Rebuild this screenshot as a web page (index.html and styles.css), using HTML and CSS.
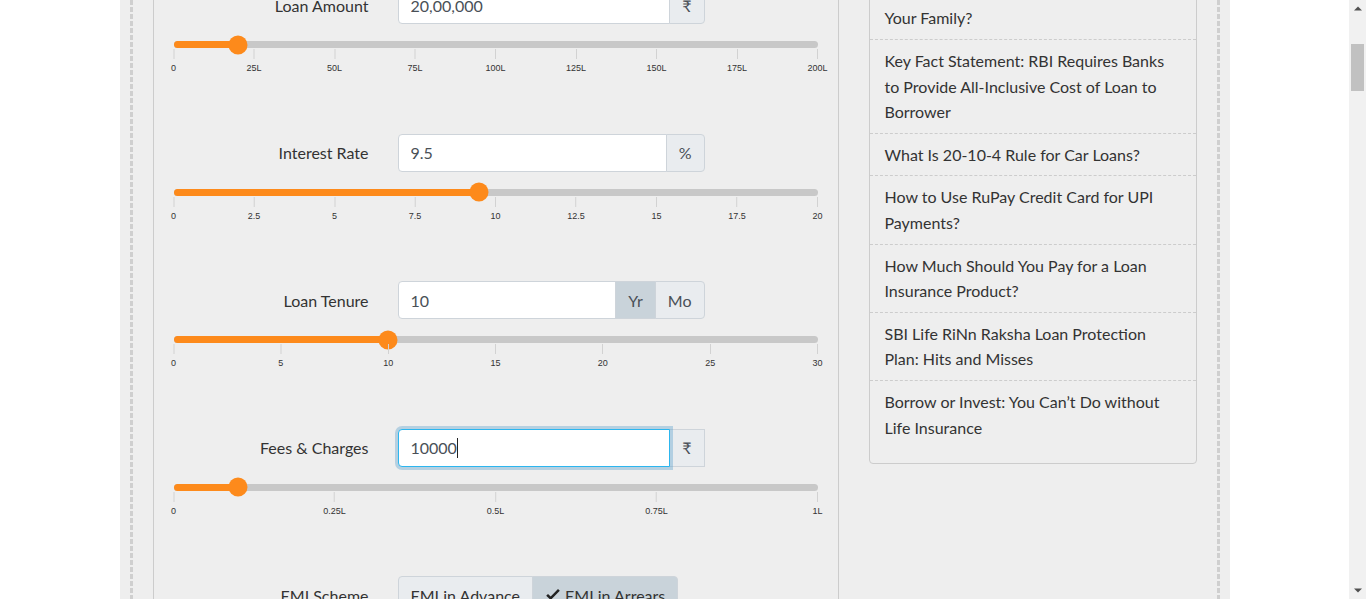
FILE: index.html
```html
<!DOCTYPE html>
<html lang="en">
<head>
<meta charset="utf-8">
<title>EMI Calculator</title>
<link rel="stylesheet" href="styles.css">
</head>
<body>
<div class="screen">
  <div class="page">
    <div class="container">
      <div class="dash"></div>
      <div class="content">
        <section class="calc">
          <div class="calc-inner">

            <div class="field">
              <div class="field-row">
                <label class="field-label">Loan Amount</label>
                <div class="input-group">
                  <input class="form-control" type="text" value="20,00,000">
                  <span class="addon">₹</span>
                </div>
              </div>
              <div class="track"><div class="fill" style="width:10%"></div><div class="handle" style="left:10%"></div></div>
              <div class="scale">
                <span class="tick" style="left:0%">0</span>
                <span class="tick" style="left:12.5%">25L</span>
                <span class="tick" style="left:25%">50L</span>
                <span class="tick" style="left:37.5%">75L</span>
                <span class="tick" style="left:50%">100L</span>
                <span class="tick" style="left:62.5%">125L</span>
                <span class="tick" style="left:75%">150L</span>
                <span class="tick" style="left:87.5%">175L</span>
                <span class="tick" style="left:100%">200L</span>
              </div>
            </div>

            <div class="field">
              <div class="field-row">
                <label class="field-label">Interest Rate</label>
                <div class="input-group">
                  <input class="form-control" type="text" value="9.5">
                  <span class="addon">%</span>
                </div>
              </div>
              <div class="track"><div class="fill" style="width:47.5%"></div><div class="handle" style="left:47.5%"></div></div>
              <div class="scale">
                <span class="tick" style="left:0%">0</span>
                <span class="tick" style="left:12.5%">2.5</span>
                <span class="tick" style="left:25%">5</span>
                <span class="tick" style="left:37.5%">7.5</span>
                <span class="tick" style="left:50%">10</span>
                <span class="tick" style="left:62.5%">12.5</span>
                <span class="tick" style="left:75%">15</span>
                <span class="tick" style="left:87.5%">17.5</span>
                <span class="tick" style="left:100%">20</span>
              </div>
            </div>

            <div class="field">
              <div class="field-row">
                <label class="field-label">Loan Tenure</label>
                <div class="input-group">
                  <input class="form-control" type="text" value="10">
                  <span class="addon active">Yr</span>
                  <span class="addon">Mo</span>
                </div>
              </div>
              <div class="track"><div class="fill" style="width:33.333%"></div><div class="handle" style="left:33.333%"></div></div>
              <div class="scale">
                <span class="tick" style="left:0%">0</span>
                <span class="tick" style="left:16.667%">5</span>
                <span class="tick" style="left:33.333%">10</span>
                <span class="tick" style="left:50%">15</span>
                <span class="tick" style="left:66.667%">20</span>
                <span class="tick" style="left:83.333%">25</span>
                <span class="tick" style="left:100%">30</span>
              </div>
            </div>

            <div class="field">
              <div class="field-row">
                <label class="field-label">Fees &amp; Charges</label>
                <div class="input-group">
                  <input class="form-control focused" type="text" value="10000">
                  <span class="addon">₹</span>
                  <span class="caret"></span>
                </div>
              </div>
              <div class="track"><div class="fill" style="width:10%"></div><div class="handle" style="left:10%"></div></div>
              <div class="scale">
                <span class="tick" style="left:0%">0</span>
                <span class="tick" style="left:25%">0.25L</span>
                <span class="tick" style="left:50%">0.5L</span>
                <span class="tick" style="left:75%">0.75L</span>
                <span class="tick" style="left:100%">1L</span>
              </div>
            </div>

            <div class="field">
              <div class="field-row">
                <label class="field-label">EMI Scheme</label>
                <div class="btn-group">
                  <span class="btn">EMI in Advance</span>
                  <span class="btn active"><svg class="check" viewBox="0 0 16 16" width="16" height="16"><path d="M1.2 8.8 L5.7 13 L14.8 3.8 L13 2.1 L5.7 9.6 L3 7 Z" fill="#222"/></svg>EMI in Arrears</span>
                </div>
              </div>
            </div>

          </div>
        </section>

        <aside class="sidebar">
          <ul class="articles">
            <li>How Much Life Cover Is Needed for<br>Your Family?</li>
            <li>Key Fact Statement: RBI Requires Banks to Provide All-Inclusive Cost of Loan to Borrower</li>
            <li>What Is 20-10-4 Rule for Car Loans?</li>
            <li>How to Use RuPay Credit Card for UPI Payments?</li>
            <li>How Much Should You Pay for a Loan Insurance Product?</li>
            <li>SBI Life RiNn Raksha Loan Protection Plan: Hits and Misses</li>
            <li>Borrow or Invest: You Can’t Do without Life Insurance</li>
          </ul>
        </aside>
      </div>
      <div class="dash"></div>
    </div>
  </div>
  <div class="scrollbar">
    <div class="sb-arrow"><svg width="8" height="5" viewBox="0 0 8 5"><path d="M0 4.5 L4 0.5 L8 4.5 Z" fill="#505050"/></svg></div>
    <div class="sb-thumb"></div>
    <div class="sb-space"></div>
    <div class="sb-arrow"><svg width="8" height="5" viewBox="0 0 8 5"><path d="M0 0.5 L4 4.5 L8 0.5 Z" fill="#505050"/></svg></div>
  </div>
</div>
</body>
</html>
```

FILE: styles.css
```css
html, body {
  margin: 0;
  padding: 0;
  height: 100%;
  overflow: hidden;
}
body {
  font-family: Lato, "Liberation Sans", sans-serif;
  color: #333;
  background: #fff;
}
.screen {
  display: flex;
  height: 599px;
}
.page {
  flex: 1;
  overflow: hidden;
  background: #fff;
}
.container {
  width: 1110px;
  height: 100%;
  margin: 0 auto;
  box-sizing: border-box;
  padding: 0 10px;
  background: #eee;
  display: flex;
}
.dash {
  width: 3px;
  flex: none;
  background: repeating-linear-gradient(to bottom, #cfcfcf 0 5px, transparent 5px 7px);
}
.content {
  flex: 1;
  display: flex;
  align-items: flex-start;
  gap: 30px;
  padding: 0 20px;
}

/* calculator */
.calc {
  width: 644px;
  padding: 0 20px;
  align-self: stretch;
  border-left: 1px solid #ccc;
  border-right: 1px solid #ccc;
}
.calc-inner {
  margin-top: -14px;
}
.field {
  height: 147.6px;
}
.field-row {
  display: grid;
  grid-template-columns: 195px 307px;
  column-gap: 29px;
  align-items: center;
  height: 38px;
}
.field-label {
  text-align: right;
  font-size: 16px;
  color: #333;
}
.input-group {
  position: relative;
  display: flex;
  height: 38px;
}
.form-control {
  flex: 1;
  min-width: 0;
  height: 38px;
  box-sizing: border-box;
  margin: 0;
  padding: 6px 12px;
  border: 1px solid #ced4da;
  border-radius: 4px 0 0 4px;
  background: #fff;
  color: #495057;
  font: 16px Lato, "Liberation Sans", sans-serif;
  outline: none;
}
.form-control.focused {
  position: relative;
  z-index: 2;
  border-color: #2cb6ef;
  box-shadow: 0 0 0 3px rgba(90, 160, 205, 0.38);
}
.addon {
  display: flex;
  align-items: center;
  padding: 0 12px;
  margin-left: -1px;
  border: 1px solid #ced4da;
  background: #e9ecef;
  color: #495057;
  font-family: Lato, "DejaVu Sans", sans-serif;
  font-size: 16px;
}
.addon:last-of-type {
  border-radius: 0 4px 4px 0;
}
.addon.active {
  background: #c9d3da;
}
.caret {
  position: absolute;
  z-index: 3;
  left: 59px;
  top: 9px;
  width: 1px;
  height: 20px;
  background: #222;
}

/* slider */
.track {
  position: relative;
  height: 7px;
  margin-top: 17px;
  border-radius: 4px;
  background: #c8c8c8;
}
.fill {
  height: 100%;
  border-radius: 4px;
  background: #fd8a1b;
}
.handle {
  position: absolute;
  top: 50%;
  width: 19px;
  height: 19px;
  border-radius: 50%;
  background: #fd8a1b;
  transform: translate(-50%, -50%);
}
.scale {
  position: relative;
  height: 26px;
  margin-top: 1px;
}
.tick {
  position: absolute;
  top: 0;
  transform: translateX(-50%);
  display: flex;
  flex-direction: column;
  align-items: center;
  font: 9px/13px "Liberation Sans", Arial, sans-serif;
  color: #333;
  white-space: nowrap;
}
.tick::before {
  content: "";
  width: 1px;
  height: 10px;
  margin-bottom: 3px;
  background: #d2d2d2;
}

/* buttons */
.btn-group {
  display: flex;
  height: 38px;
}
.btn {
  display: flex;
  align-items: center;
  gap: 4px;
  height: 38px;
  box-sizing: border-box;
  padding: 0 12px;
  border: 1px solid #ced4da;
  background: #e9ecef;
  color: #333;
  font-size: 16px;
  white-space: nowrap;
}
.btn:first-child {
  border-radius: 4px 0 0 4px;
}
.btn + .btn {
  margin-left: -1px;
  border-radius: 0 4px 4px 0;
}
.btn.active {
  background: #c9d3da;
}

/* sidebar */
.sidebar {
  width: 326px;
  margin-top: -29.2px;
  padding-bottom: 15px;
  border: 1px solid #ccc;
  border-radius: 4px;
}
.articles {
  list-style: none;
  margin: 0;
  padding: 0;
}
.articles li {
  padding: 8px 15px;
  border-bottom: 1px dashed #ccc;
  font-size: 16px;
  line-height: 1.6;
  color: #333;
}
.articles li:last-child {
  border-bottom: none;
}

/* scrollbar */
.scrollbar {
  width: 17px;
  flex: none;
  display: flex;
  flex-direction: column;
  align-items: center;
  background: #f1f1f1;
}
.sb-arrow {
  width: 17px;
  height: 17px;
  display: flex;
  align-items: center;
  justify-content: center;
}
.sb-thumb {
  width: 13px;
  height: 47px;
  margin-top: 27px;
  background: #c1c1c1;
}
.sb-space {
  flex: 1;
}
```
